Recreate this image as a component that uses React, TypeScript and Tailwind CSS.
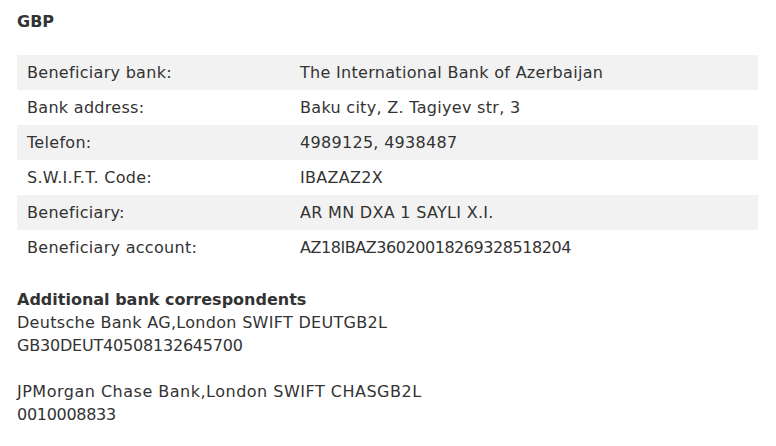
const rows: [string, string, string][] = [
  ['Beneficiary bank:', 'The International Bank of Azerbaijan', ''],
  ['Bank address:', 'Baku city, Z. Tagiyev str, 3', ''],
  ['Telefon:', '4989125, 4938487', ''],
  ['S.W.I.F.T. Code:', 'IBAZAZ2X', ''],
  ['Beneficiary:', 'AR MN DXA 1 SAYLI X.I.', ''],
  ['Beneficiary account:', 'AZ18IBAZ36020018269328518204', 'tracking-[-0.45px]'],
];

export default function App() {
  return (
    <main
      className="min-h-screen bg-white px-[17px] pt-[11px] text-[16px] tracking-[0.3px] text-[#333333]"
      style={{ fontFamily: '"DejaVu Sans", sans-serif' }}
    >
      {/* Currency */}
      <h2 className="text-[16px] font-bold leading-[22px] tracking-normal">GBP</h2>

      {/* Details table */}
      <div className="mt-[22px] w-[741px]">
        {rows.map(([label, value, extra], i) => (
          <div
            key={label}
            className={`flex h-[35px] items-center ${i % 2 === 0 ? 'bg-[#f2f2f2]' : 'bg-white'}`}
          >
            <div className="w-[273px] pl-[10px]">{label}</div>
            <div className={`pl-[10px] ${extra}`}>{value}</div>
          </div>
        ))}
      </div>

      {/* Correspondents */}
      <div className="mt-[23px] leading-[23px]">
        <p className="font-bold tracking-normal">Additional bank correspondents</p>
        <p>Deutsche Bank AG,London SWIFT DEUTGB2L</p>
        <p className="tracking-[-0.2px]">GB30DEUT40508132645700</p>
        <p>&nbsp;</p>
        <p className="tracking-[0.5px]">JPMorgan Chase Bank,London SWIFT CHASGB2L</p>
        <p className="tracking-[-0.3px]">0010008833</p>
      </div>
    </main>
  );
}
